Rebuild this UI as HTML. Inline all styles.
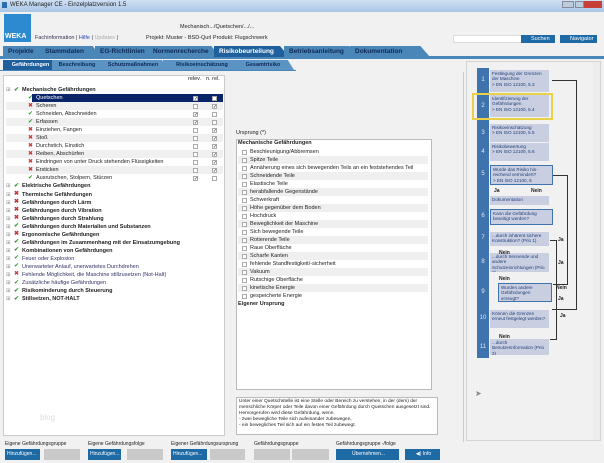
<!DOCTYPE html><html><head><meta charset="utf-8"><style>
*{margin:0;padding:0;box-sizing:border-box}
body{width:604px;height:463px;overflow:hidden;background:#f1f1f1;font-family:"Liberation Sans",sans-serif;font-size:5.5px;color:#222;position:relative}
.a{position:absolute;white-space:nowrap}
.tab{position:absolute;height:11px;background:#4b86b8;color:#0d2a55;font-weight:bold;font-size:6.5px;line-height:11px;padding-left:5px;clip-path:polygon(0 0,88% 0,100% 100%,0 100%)}
.st{position:absolute;height:10px;background:#5b93c4;color:#0d2a55;font-weight:bold;font-size:5.5px;line-height:10px;text-align:center;clip-path:polygon(0 0,90% 0,100% 100%,0 100%)}
.tr{position:absolute;left:6px;height:8px;line-height:8px;width:217px}
.ic{display:inline-block;width:6px;height:6px;vertical-align:middle;margin-right:2px;font-size:6px;line-height:6px}
.ok{color:#2a9a2a}.no{color:#c33}
.cb{position:absolute;width:5px;height:5px;border:1px solid #aaa;background:#fff}
.ml{position:absolute;left:238px;width:190px;height:8px;line-height:8px;padding-left:12px}
.ml i{position:absolute;left:4px;top:1.5px;width:5px;height:5px;border:1px solid #aaa;background:#fff}
.fb{position:absolute;background:#c9cfe0;color:#1e3d7a;font-size:4.6px;line-height:5.3px;padding:1px 2px;overflow:hidden}
.num{position:absolute;left:477px;width:12px;color:#dfe8f5;font-size:6px;text-align:center}
.btn{position:absolute;top:449px;height:11px;background:#1e6aa5;color:#fff;font-size:5px;line-height:11px;padding-left:2px}
.gb{position:absolute;top:449px;height:11px;background:#c9c9c9}
.lb{position:absolute;top:441px;font-size:5px}
</style></head><body>
<div class="a" style="left:0;top:0;width:604px;height:12px;background:linear-gradient(#cfe0f3,#a9c6e6)"></div>
<div class="a" style="left:2px;top:2px;width:5px;height:6px;background:#2b6bb0"></div>
<div class="a" style="left:10px;top:2px;font-size:6px">WEKA Manager CE - Einzelplatzversion 1.5</div>
<div class="a" style="left:562px;top:1px;width:12px;height:7px;background:#bcd;border:1px solid #889"></div>
<div class="a" style="left:575px;top:1px;width:9px;height:7px;background:#bcd;border:1px solid #889"></div>
<div class="a" style="left:584px;top:1px;width:18px;height:7px;background:#c8403a"></div>
<div class="a" style="left:4px;top:14px;width:27px;height:28px;background:#2c8bd0"></div>
<div class="a" style="left:5px;top:33px;color:#fff;font-weight:bold;font-size:7px">WEKA</div>
<div class="a" style="left:35px;top:35px;color:#335">Fachinformation | <span style="color:#24a">Hilfe</span> | <span style="color:#aaa">Updates</span> |</div>
<div class="a" style="left:180px;top:24px">Mechanisch.../Quetschen/.../...</div>
<div class="a" style="left:146px;top:35px">Projekt: Muster - BSD-Qurl Produkt: Flugschrwerk</div>
<div class="a" style="left:453px;top:35px;width:70px;height:8px;background:#fff;border:1px solid #ddd"></div>
<div class="a" style="left:521px;top:35px;width:34px;height:8px;background:#1e6aa5;color:#fff;line-height:8px;padding-left:10px">Suchen</div>
<div class="a" style="left:560px;top:35px;width:37px;height:8px;background:#1e6aa5;color:#fff;line-height:8px;padding-left:10px">Navigator</div>
<div class="a" style="left:0;top:56px;width:604px;height:3px;background:#4b86b8"></div>
<div class="tab" style="left:3px;top:46px;width:42px">Projekte</div>
<div class="tab" style="left:40px;top:46px;width:60px">Stammdaten</div>
<div class="tab" style="left:95px;top:46px;width:60px">EG-Richtlinien</div>
<div class="tab" style="left:148px;top:46px;width:72px">Normenrecherche</div>
<div class="tab" style="left:214px;top:46px;width:75px;background:#1e5f9e;color:#fff">Risikobeurteilung</div>
<div class="tab" style="left:284px;top:46px;width:74px">Betriebsanleitung</div>
<div class="tab" style="left:350px;top:46px;width:80px">Dokumentation</div>
<div class="st" style="left:3px;top:60px;width:55px;background:#1e5f9e;color:#fff">Gefährdungen</div>
<div class="st" style="left:52px;top:60px;width:50px">Beschreibung</div>
<div class="st" style="left:97px;top:60px;width:72px">Schutzmaßnahmen</div>
<div class="st" style="left:163px;top:60px;width:78px">Risikoeinschätzung</div>
<div class="st" style="left:232px;top:60px;width:62px">Gesamtrisiko</div>
<div class="a" style="left:0;top:70px;width:296px;height:1px;background:#4b86b8"></div>
<div class="a" style="left:3px;top:75px;width:222px;height:361px;background:#fff;border:1px solid #ccc"></div>
<div class="a" style="left:188px;top:76px">relev.</div><div class="a" style="left:206px;top:76px">n. rel.</div>
<div id="tree"></div>
<div class="a" style="left:236px;top:130px">Ursprung (*)</div>
<div class="a" style="left:236px;top:139px;width:196px;height:251px;background:#fff;border:1px solid #bbb"></div>
<div id="mid"></div>
<div class="a" style="left:236px;top:397px;width:202px;height:38px;background:#fff;border:1px solid #bbb;font-size:4.8px;line-height:6px;padding:1px 2px;white-space:normal">Unter einer Quetschstelle ist eine Stelle oder Bereich zu verstehen, in der (dem) der menschliche Körper oder Teile davon einer Gefährdung durch Quetschen ausgesetzt sind. Hervorgerufen wird diese Gefährdung, wenn<br>- zwei bewegliche Teile sich aufeinander zubewegen,<br>- ein bewegliches Teil sich auf ein festes Teil zubewegt.</div>
<div class="a" style="left:40px;top:413px;color:#ddd;font-size:8px">blog</div>
<div class="a" style="left:463px;top:72px;width:1px;height:370px;background:#ccc"></div>
<div class="a" style="left:466px;top:61px;width:135px;height:380px;border:1px solid #d4d4d4"></div>
<div class="a" style="left:593px;top:62px;width:7px;height:378px;background:#ececec"></div>
<div class="a" style="left:477px;top:68px;width:12px;height:290px;background:#3f73ae"></div>
<div id="flow"></div>
<div class="a" style="left:475px;top:389px;font-size:8px;color:#888">➤</div>
<div class="lb" style="left:5px">Eigene Gefährdungsgruppe</div>
<div class="lb" style="left:88px">Eigene Gefährdungsfolge</div>
<div class="lb" style="left:171px">Eigener Gefährdungsursprung</div>
<div class="lb" style="left:254px">Gefährdungsgruppe</div>
<div class="lb" style="left:336px">Gefährdungsgruppe -/folge</div>
<div class="btn" style="left:5px;width:35px">Hinzufügen...</div><div class="gb" style="left:44px;width:36px"></div>
<div class="btn" style="left:88px;width:33px">Hinzufügen...</div><div class="gb" style="left:127px;width:36px"></div>
<div class="btn" style="left:171px;width:36px">Hinzufügen...</div><div class="gb" style="left:210px;width:35px"></div>
<div class="gb" style="left:254px;width:36px"></div><div class="gb" style="left:292px;width:37px"></div>
<div class="btn" style="left:336px;width:63px;text-align:center">Übernehmen...</div>
<div class="btn" style="left:405px;width:35px;text-align:center">◀) Info</div>
<script>
var T=[["Mechanische Gefährdungen",1,0,1],["Quetschen",1,1,0,1,1,0],["Scheren",0,1,0,1,0,1],["Schneiden, Abschneiden",1,1,0,1,1,0],["Erfassen",1,1,0,1,1,0],["Einziehen, Fangen",0,1,0,1,0,1],["Stoß",0,1,0,1,0,1],["Durchstich, Einstich",0,1,0,1,0,1],["Reiben, Abschürfen",0,1,0,1,0,1],["Eindringen von unter Druck stehenden Flüssigkeiten",0,1,0,1,0,1],["Ersticken",0,1,0,1,0,1],["Ausrutschen, Stolpern, Stürzen",1,1,0,1,1,0],["Elektrische Gefährdungen",1,0,1],["Thermische Gefährdungen",0,0,1],["Gefährdungen durch Lärm",0,0,1],["Gefährdungen durch Vibration",0,0,1],["Gefährdungen durch Strahlung",0,0,1],["Gefährdungen durch Materialien und Substanzen",1,0,1],["Ergonomische Gefährdungen",0,0,1],["Gefährdungen im Zusammenhang mit der Einsatzumgebung",1,0,1],["Kombinationen von Gefährdungen",1,0,1],["Feuer oder Explosion",1,0,0],["Unerwarteter Anlauf, unerwartetes Durchdrehen",1,0,0],["Fehlende Möglichkeit, die Maschine stillzusetzen (Not-Halt)",0,0,0],["Zusätzliche häufige Gefährdungen",1,0,0],["Risikominderung durch Steuerung",1,0,1],["Stillsetzen, NOT-HALT",1,0,1]];
var h="";T.forEach(function(r,i){var y=86+i*8.04;var x=r[2]?20:6;var bg=(r[2]&&i%2==0?"background:#f0f0f0;":"");
h+='<div class="tr" style="top:'+y+'px;left:6px;'+(i==1?'':bg)+'"><span style="position:absolute;left:0;color:#999">'+(r[2]?'':'⊞')+'</span>'+(i==1?'<span style="position:absolute;left:26px;width:191px;height:8px;background:#0a246a"></span>':'')+'<span style="position:absolute;left:'+(x+2)+'px;'+(r[3]?'font-weight:bold;':'')+(i==1?'color:#fff;':'color:'+(r[2]||r[3]?'#222':'#336')+';')+'"><span class="ic '+(r[1]?'ok':'no')+'">'+(r[1]?'✔':'✖')+'</span>'+r[0]+'</span></div>';
if(r[4]){h+='<div class="cb" style="left:193px;top:'+(y+1.5)+'px;text-align:center;font-size:5px;line-height:4px">'+(r[5]?'✓':'')+'</div><div class="cb" style="left:212px;top:'+(y+1.5)+'px;text-align:center;font-size:5px;line-height:4px">'+(r[6]?'✓':'')+'</div>';}});
document.getElementById("tree").outerHTML=h;
var M=["Beschleunigung/Abbremsen","Spitze Teile","Annäherung eines sich bewegenden Teils an ein feststehendes Teil","Schneidende Teile","Elastische Teile","herabfallende Gegenstände","Schwerkraft","Höhe gegenüber dem Boden","Hochdruck","Beweglichkeit der Maschine","Sich bewegende Teile","Rotierende Teile","Raue Oberfläche","Scharfe Kanten","fehlende Standfestigkeit/-sicherheit","Vakuum","Rutschige Oberfläche","kinetische Energie","gespeicherte Energie"];
h='<div class="a" style="left:238px;top:140px;font-weight:bold">Mechanische Gefährdungen</div>';
M.forEach(function(m,i){h+='<div class="ml" style="top:'+(148+i*8)+'px;'+(i%2?'background:#efefef':'')+'"><i></i>'+m+'</div>'});
h+='<div class="a" style="left:238px;top:301px;font-weight:bold">Eigener Ursprung</div>';
document.getElementById("mid").outerHTML=h;
var F=[[1,70,22,"Festlegung der Grenzen der Maschine<br>&gt; EN ISO 12100, 5.3"],[2,95,22,"Identifizierung der Gefährdungen<br>&gt; EN ISO 12100, 5.4"],[3,124,18,"Risikoeinschätzung<br>&gt; EN ISO 12100, 5.5"],[4,143,18,"Risikobewertung<br>&gt; EN ISO 12100, 5.6"],[5,165,20,"Wurde das Risiko hin-reichend vermindert?<br>&gt; EN ISO 12100, 6"],[6,209,16,"Kann die Gefährdung beseitigt werden?"],[7,232,14,"...durch inhärent sichere Konstruktion? (Prio 1)"],[8,253,19,"...durch trennende und andere Schutzeinrichtungen (Prio 2)"],[10,310,18,"Können die Grenzen erneut festgelegt werden?"],[11,339,16,"...durch Benutzerinformation (Prio 3)"]];
h="";F.forEach(function(f){h+='<div class="fb" style="left:490px;top:'+f[1]+'px;width:59px;height:'+f[2]+'px;white-space:normal;'+([5,6].indexOf(f[0])>=0?'border:1px solid #3f73ae;width:63px;':'')+'">'+f[3]+'</div>'});
[1,2,3,4,5,6,7,8,9,10,11].forEach(function(n,i){var y=[77,103,130,149,171,213,235,259,289,315,344][i];h+='<div class="num a" style="top:'+y+'px">'+n+'</div>'});
h+='<div class="fb" style="left:490px;top:196px;width:59px;height:9px">Dokumentation</div>';
h+='<div class="fb" style="left:498px;top:283px;width:54px;height:19px;border:1px solid #3f73ae;white-space:normal">Wurden andere Gefährdungen erzeugt?</div>';
h+='<div class="a" style="left:472px;top:93px;width:81px;height:27px;border:2px solid #e8d048"></div>';
h+='<div class="a" style="left:552px;top:80px;width:25px;height:230px;border:1px solid #333;border-left:none"></div>';
h+='<div class="a" style="left:553px;top:175px;width:15px;height:110px;border:1px solid #333;border-left:none"></div>';
h+='<div class="a" style="left:550px;top:240px;width:7px;height:100px;border:1px solid #333;border-left:none"></div>';
[["Ja",494,188],["Nein",531,188],["Ja",558,237],["Nein",499,250],["Ja",558,260],["Nein",499,276],["Nein",556,285],["Ja",558,296],["Ja",560,313],["Nein",499,334]].forEach(function(l){h+='<div class="a" style="left:'+l[1]+'px;top:'+l[2]+'px;font-weight:bold;font-size:5px">'+l[0]+'</div>'});
document.getElementById("flow").outerHTML=h;
</script>
</body></html>
